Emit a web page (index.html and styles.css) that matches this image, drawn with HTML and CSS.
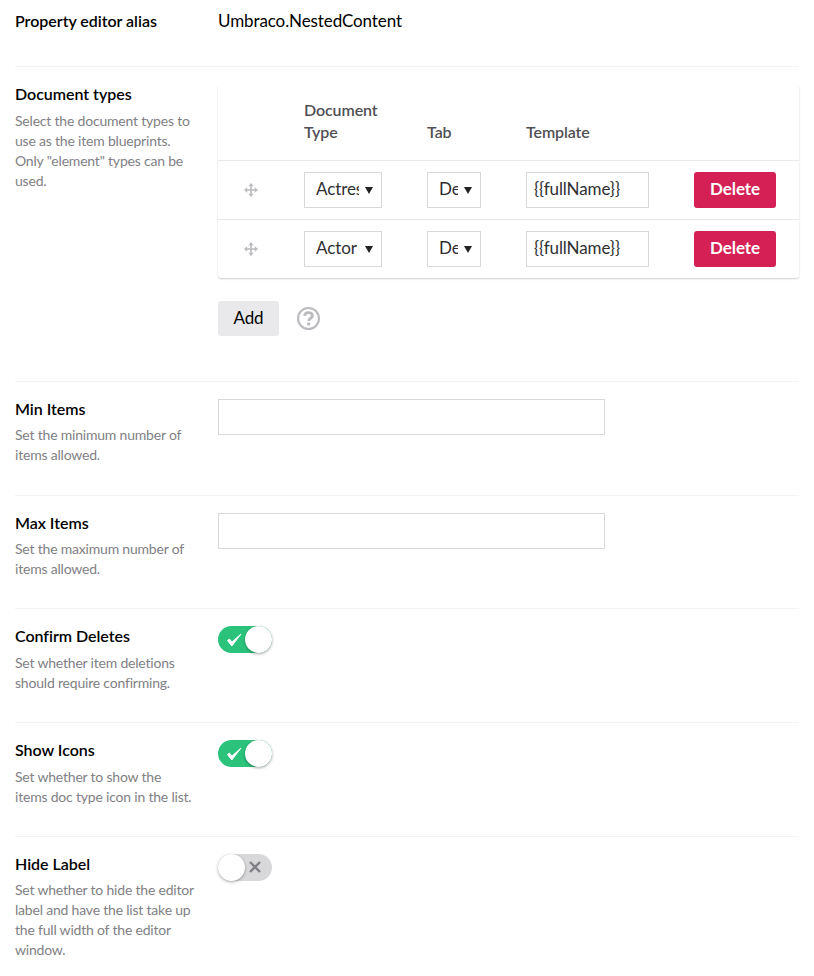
FILE: index.html
```html
<!DOCTYPE html>
<html lang="en">
<head>
<meta charset="utf-8">
<title>Nested Content</title>
<link rel="stylesheet" href="styles.css">
</head>
<body>
<main class="editor">
  <section class="property alias">
    <div class="info"><h2>Property editor alias</h2></div>
    <div class="control">Umbraco.NestedContent</div>
  </section>
  <section class="property types">
    <div class="info"><h2>Document types</h2><p>Select the document types to<br>use as the item blueprints.<br>Only "element" types can be<br>used.</p></div>
    <div class="control">
      <div class="table">
        <div class="row head"><span></span><span>Document<br>Type</span><span>Tab</span><span>Template</span><span></span></div>
        <div class="row">
          <svg class="move" viewBox="0 0 14 14"><path d="M7 1v12M1 7h12"/><path class="tips" d="M7 0l2.700 3.200H4.300zM7 14l2.700-3.200H4.300zM0 7l3.200-2.700v5.400zM14 7l-3.200-2.700v5.400z"/></svg>
          <div class="field select"><span>Actress</span><i></i></div>
          <div class="field select tab"><span>Default</span><i></i></div>
          <div class="field template">{{fullName}}</div>
          <button class="delete">Delete</button>
        </div>
        <div class="row">
          <svg class="move" viewBox="0 0 14 14"><path d="M7 1v12M1 7h12"/><path class="tips" d="M7 0l2.700 3.200H4.300zM7 14l2.700-3.200H4.300zM0 7l3.200-2.700v5.400zM14 7l-3.200-2.700v5.400z"/></svg>
          <div class="field select"><span>Actor</span><i></i></div>
          <div class="field select tab"><span>Default</span><i></i></div>
          <div class="field template">{{fullName}}</div>
          <button class="delete">Delete</button>
        </div>
      </div>
      <div class="actions">
        <button class="add">Add</button>
        <svg class="help" viewBox="0 0 24 24"><circle cx="12" cy="12" r="10.900"/><path d="M8 9.200c.3-4.600 8-4.200 8 0 0 2.700-3.800 2.500-3.800 5.500M12.200 16.300v3"/></svg>
      </div>
    </div>
  </section>
  <section class="property min">
    <div class="info"><h2>Min Items</h2><p>Set the minimum number of<br>items allowed.</p></div>
    <div class="control"><input class="number" type="text"></div>
  </section>
  <section class="property max">
    <div class="info"><h2>Max Items</h2><p>Set the maximum number of<br>items allowed.</p></div>
    <div class="control"><input class="number" type="text"></div>
  </section>
  <section class="property confirm">
    <div class="info"><h2>Confirm Deletes</h2><p>Set whether item deletions<br>should require confirming.</p></div>
    <div class="control"><div class="toggle on"><svg viewBox="0 0 16 14"><path d="M1.500 7.500L5.800 13 15 1 6 9 3.300 6z"/></svg><b></b></div></div>
  </section>
  <section class="property icons">
    <div class="info"><h2>Show Icons</h2><p>Set whether to show the<br>items doc type icon in the list.</p></div>
    <div class="control"><div class="toggle on"><svg viewBox="0 0 16 14"><path d="M1.500 7.500L5.800 13 15 1 6 9 3.300 6z"/></svg><b></b></div></div>
  </section>
  <section class="property hide">
    <div class="info"><h2>Hide Label</h2><p>Set whether to hide the editor<br>label and have the list take up<br>the full width of the editor<br>window.</p></div>
    <div class="control"><div class="toggle"><b></b><svg viewBox="0 0 14 14"><path d="M2 2l10 10M12 2L2 12"/></svg></div></div>
  </section>
</main>
</body>
</html>
```
FILE: styles.css
```css
* { box-sizing: border-box; }
body { margin: 0; background: #fff; color: #000; font: 17px/20px Lato, sans-serif; letter-spacing: -.1px; }
.editor { width: 784px; margin-left: 15px; }
.property { display: flex; border-bottom: 1px solid #f3f3f5; padding-top: 17px; }
.info { width: 203px; flex: none; }
h2 { margin: 0; font-size: 16px; line-height: 20px; font-weight: 600; letter-spacing: -.03px; }
p { margin: 6px 0 0; color: #817f85; font-size: 14px; line-height: 20px; letter-spacing: -.2px; white-space: nowrap; }
.control { width: 581px; }
.alias { height: 67px; padding-top: 11px; }
.types { height: 315px; }
.types p, .confirm p, .icons p { margin-top: 7px; }
.min { height: 114px; }
.max { height: 113px; }
.confirm { height: 114px; }
.icons { height: 114px; }
.hide { border: 0; height: 139px; }
.table { margin-top: 1px; border-radius: 3px; box-shadow: 0 1px 2px rgba(0,0,0,.2); }
.row { display: grid; grid-template-columns: 87px 123px 99px 168px 82px; align-items: center; height: 59px; margin-left: -1px; border-top: 1px solid #e9e9eb; }
.row.head { height: 75px; border: 0; color: #515054; font-weight: 600; font-size: 16px; line-height: 22px; align-items: end; padding-bottom: 17px; }
.move { width: 14px; height: 14px; margin-left: 27px; fill: none; stroke: #bbbabf; stroke-width: 1.6; }
.move .tips { fill: #bbbabf; stroke: none; }
.field { height: 36px; border: 1px solid #d8d7d9; color: #303033; line-height: 32px; white-space: nowrap; }
.select { width: 78px; padding-left: 11px; display: flex; align-items: center; }
.select span { width: 43px; height: 34px; overflow: hidden; }
.select i { margin-left: 6px; border: 4px solid transparent; border-top: 7px solid #222; border-bottom: 0; }
.tab { width: 54px; }
.tab span { width: 19px; }
.template { width: 123px; padding-left: 7px; }
button { font: 17px/20px Lato, sans-serif; letter-spacing: -.1px; border: 0; border-radius: 3px; padding: 0 0 2px; }
.delete { height: 36px; background: #d42054; color: #fff; font-weight: 700; }
.actions { display: flex; align-items: center; gap: 18px; margin-top: 23px; }
.add { width: 61px; height: 35px; background: #e9e9eb; }
.help { width: 23px; height: 23px; margin-bottom: 1px; fill: none; stroke: #bbbabf; stroke-width: 2.2; }
.help path { stroke-width: 3; }
.number { display: block; width: 387px; height: 36px; border: 1px solid #d8d7d9; padding: 0 6px; font: inherit; }
.toggle { display: flex; align-items: center; width: 54px; height: 27px; border-radius: 14px; background: #d8d7d9; }
.toggle.on { background: #2bc37c; }
.toggle b { width: 27px; height: 27px; border-radius: 50%; background: #fff; box-shadow: 0 1px 3px rgba(0,0,0,.35); }
.toggle svg { width: 14px; height: 14px; margin: 0 0 2px 3px; fill: none; stroke: #817f85; stroke-width: 2.4; }
.toggle.on svg { width: 16px; margin: 0 3px 0 8px; fill: #fff; stroke: #fff; stroke-width: 1; }
```
